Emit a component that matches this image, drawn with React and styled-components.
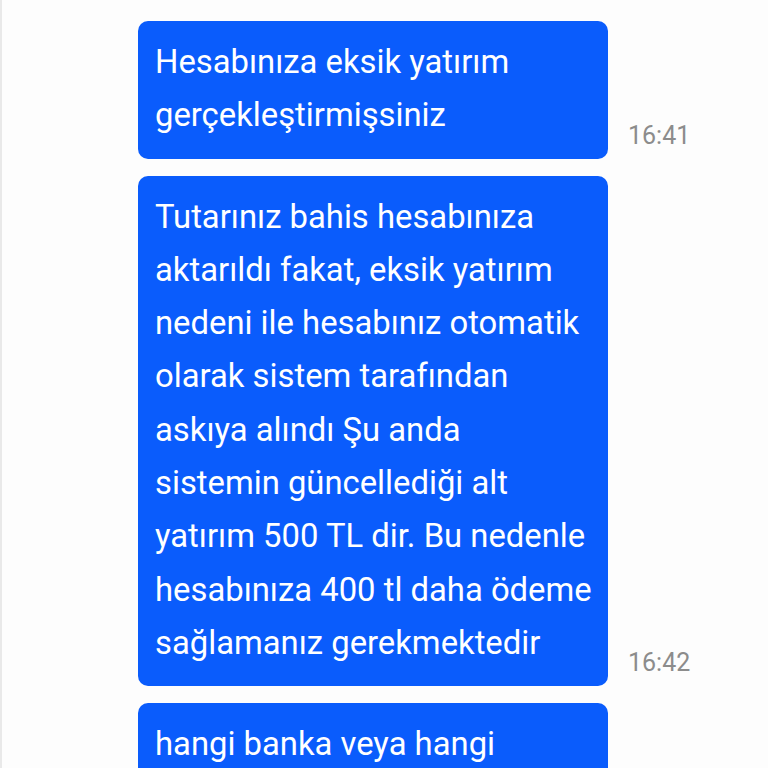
import styled, { createGlobalStyle } from "styled-components";

const GlobalStyle = createGlobalStyle`
  html, body {
    margin: 0;
    padding: 0;
    background: #fdfdfd;
    overflow: hidden;
  }
  body {
    font-family: Roboto, "Noto Sans", sans-serif;
  }
`;

// lines kept as they wrap on the phone
const messages = [
  {
    id: 1,
    lines: ["Hesabınıza eksik yatırım", "gerçekleştirmişsiniz"],
    time: "16:41",
  },
  {
    id: 2,
    lines: [
      "Tutarınız bahis hesabınıza",
      "aktarıldı fakat, eksik yatırım",
      "nedeni ile hesabınız otomatik",
      "olarak sistem tarafından",
      "askıya alındı Şu anda",
      "sistemin güncellediği alt",
      "yatırım 500 TL dir. Bu nedenle",
      "hesabınıza 400 tl daha ödeme",
      "sağlamanız gerekmektedir",
    ],
    time: "16:42",
  },
  {
    id: 3,
    lines: ["hangi banka veya hangi", "yöntem ile ödeme yapabilirim"],
    time: "",
  },
];

const App = () => {
  return (
    <>
      <GlobalStyle />
      <Screen>
        <Thread>
          {messages.map((m) => (
            <Row key={m.id}>
              <Bubble>
                {m.lines.map((line, i) => (
                  <Line key={i}>{line}</Line>
                ))}
              </Bubble>
              {m.time && <Time>{m.time}</Time>}
            </Row>
          ))}
        </Thread>
      </Screen>
    </>
  );
};

const Screen = styled.div`
  height: 768px;
  border-left: 2px solid #e9e9e9;
  box-sizing: border-box;
  overflow: hidden;
`;

const Thread = styled.div`
  display: flex;
  flex-direction: column;
  gap: 17px;
  padding: 21px 0 0 136px;
`;

const Row = styled.div`
  display: flex;
  align-items: flex-end;
  gap: 20px;
`;

const Bubble = styled.div`
  width: 470px;
  box-sizing: border-box;
  padding: 15px 17px 16px;
  background: #0a5cfc;
  color: #ffffff;
  border-radius: 10px;
  font-size: 32.8px;
  line-height: 53.3px;
`;

const Line = styled.div`
  white-space: nowrap;
`;

const Time = styled.span`
  color: #8c8c8c;
  font-size: 25px;
  line-height: 28px;
  padding-bottom: 9px;
`;

export default App;
